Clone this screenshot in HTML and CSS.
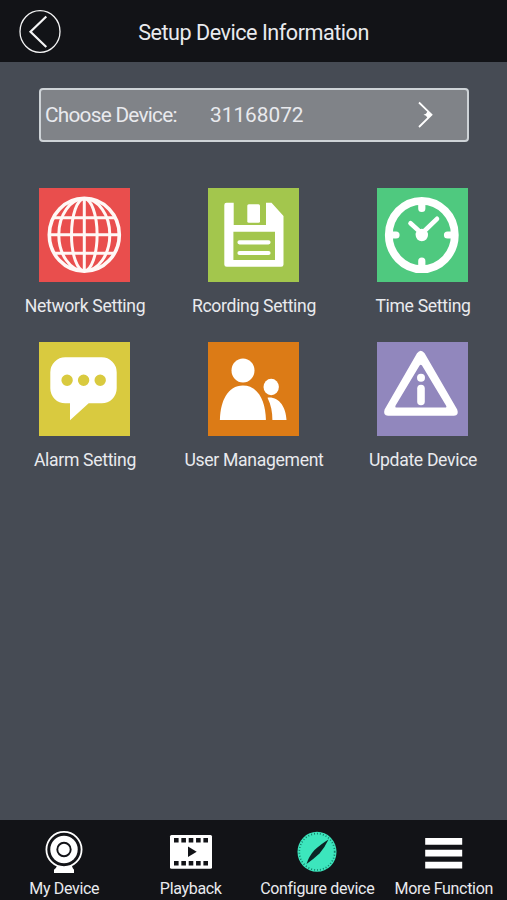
FILE: index.html
```html
<!DOCTYPE html>
<html lang="en">
<head>
<meta charset="utf-8">
<title>Setup Device Information</title>
<link rel="stylesheet" href="styles.css">
</head>
<body>
<div class="app">
  <header class="header">
    <button class="back" aria-label="Back">
      <svg width="42" height="44" viewBox="0 0 42 44" fill="none" stroke="#f4f4f5">
        <ellipse cx="21" cy="21.500" rx="20" ry="20.800" stroke-width="1.300"/>
        <path d="M27.300 6.500 11.500 21.800 27.300 37" stroke-width="2.200"/>
      </svg>
    </button>
    <h1 class="title">Setup Device Information</h1>
  </header>

  <main class="main">
    <div class="chooser">
      <span class="chooser-label">Choose Device:</span>
      <span class="chooser-value">31168072</span>
      <svg class="chooser-arrow" width="18" height="28" viewBox="0 0 18 28">
        <path d="M3 1.500 15.500 13.700 3 26" fill="none" stroke="#fff" stroke-width="1.800"/>
        <path d="m7.500 13.700 2.500-1 1.500-2.200 3.800 3.200-3.800 3.200-1.500-2.200z" fill="#fff"/>
      </svg>
    </div>

    <div class="grid">
      <a class="item">
        <svg class="tile red" viewBox="0 0 91 94" fill="none" stroke="#fff8f6" stroke-width="3">
          <ellipse cx="45.300" cy="46.800" rx="35" ry="36.500" stroke-width="3.600"/>
          <ellipse cx="45.300" cy="46.800" rx="12.800" ry="36"/>
          <ellipse cx="45.300" cy="46.800" rx="25.500" ry="36"/>
          <path d="M45.300 10v73M10 46.800h70M15 29.800h60.500M15 65.300h60.500"/>
        </svg>
        <span class="label">Network Setting</span>
      </a>
      <a class="item">
        <svg class="tile green" viewBox="0 0 91 94">
          <path fill="#fff" fill-rule="evenodd" d="M18.500 14.700h7.200V37H58V14.700h5.500L75.500 28v48.500q0 2.300-2.300 2.300H18.700q-2.400 0-2.400-2.300V17q0-2.300 2.200-2.300zM25.400 43.700V72H67V43.700z"/>
          <rect x="39.300" y="16.300" width="12.700" height="18.400" rx="1.500" fill="#fff"/>
          <path d="M31.500 54.300h29M31.500 65h29" stroke="#fff" stroke-width="4.200" stroke-linecap="round"/>
        </svg>
        <span class="label">Rcording Setting</span>
      </a>
      <a class="item">
        <svg class="tile mint" viewBox="0 0 91 94" fill="none" stroke="#fff" stroke-linecap="round">
          <ellipse cx="44.800" cy="47" rx="33" ry="34.200" stroke-width="7.800"/>
          <path d="M44.800 14v6.500M44.800 73v7M12 47h7M70.500 47h7" stroke-width="7.200"/>
          <path d="M44.800 45.500 33.500 35.200M44.800 45.500 60 30.800" stroke-width="4.600"/>
          <circle cx="44.800" cy="47" r="6.200" fill="#fff" stroke="none"/>
        </svg>
        <span class="label">Time Setting</span>
      </a>
      <a class="item">
        <svg class="tile yellow" viewBox="0 0 91 94">
          <path fill="#fff" fill-rule="evenodd" d="M26.300 15.300h36.400a15 15 0 0 1 15 15v16a15 15 0 0 1-15 15h-13L31 78.300V61.300h-4.700a15 15 0 0 1-15-15v-16a15 15 0 0 1 15-15zM22.400 38.300a5.700 5.700 0 1 0 11.400 0a5.700 5.700 0 1 0-11.400 0M38.900 38.300a5.700 5.700 0 1 0 11.400 0a5.700 5.700 0 1 0-11.400 0M55.500 38.300a5.700 5.700 0 1 0 11.400 0a5.700 5.700 0 1 0-11.400 0"/>
        </svg>
        <span class="label">Alarm Setting</span>
      </a>
      <a class="item">
        <svg class="tile orange" viewBox="0 0 91 94" fill="#fff">
          <ellipse cx="35" cy="28.400" rx="11.500" ry="12"/>
          <path d="M11.900 78C12.200 59 19.700 43.400 34.900 43.400S57.600 59 57.900 78z"/>
          <ellipse cx="63.200" cy="45" rx="7.700" ry="8.200"/>
          <path d="M59.500 55.700C71 54.500 78 65 78.500 78H64.400C64.400 70 63.200 63 59.500 55.700z"/>
        </svg>
        <span class="label">User Management</span>
      </a>
      <a class="item">
        <svg class="tile purple" viewBox="0 0 91 94">
          <path fill="#fff" fill-rule="evenodd" d="M40 11.300Q43.800 6.300 47.600 11.300L80.200 67.500Q82.300 73.500 77 73.700H11Q5.700 73.500 7.600 67.500zM42.600 23.500 18.600 63.500Q17.700 65.600 19.500 65.600H68.200Q70.200 65.600 69 63.500L45 23.500Q43.800 21.800 42.600 23.500z"/>
          <circle cx="44" cy="35.700" r="4" fill="#fff"/>
          <path d="M44 46.500v13" stroke="#fff" stroke-width="7.600" stroke-linecap="round"/>
        </svg>
        <span class="label">Update Device</span>
      </a>
    </div>
  </main>

  <nav class="nav">
    <a class="tab">
      <svg class="tab-icon" viewBox="0 0 46 46">
        <path d="M16 38h15q.5 2.500 2 3.800v3.200H13v-3.200q2-1.300 3-3.800z" fill="#fff"/>
        <circle cx="23" cy="21.500" r="17.600" fill="#121317" stroke="#fff" stroke-width="1.800"/>
        <circle cx="23" cy="21.500" r="13.700" fill="#fff"/>
        <circle cx="23" cy="21.500" r="6.700" fill="#fff" stroke="#121317" stroke-width="1.900"/>
      </svg>
      <span class="tab-label">My Device</span>
    </a>
    <a class="tab">
      <svg class="tab-icon" viewBox="0 0 46 46">
        <rect x="2" y="7" width="42" height="33.700" rx="1.500" fill="#fff"/>
        <path d="M6 12.200h34.400M6 35.300h34.400" stroke="#121317" stroke-width="4.600" stroke-dasharray="4.600 2.750"/>
        <path d="M20 18.500v10.400l8.700-5.200z" fill="#121317"/>
      </svg>
      <span class="tab-label">Playback</span>
    </a>
    <a class="tab">
      <svg class="tab-icon" viewBox="0 0 46 46">
        <ellipse cx="23" cy="23.800" rx="19.500" ry="20" fill="#3ce6bd"/>
        <ellipse cx="23" cy="23.800" rx="17.700" ry="18.200" fill="none" stroke="#157f6a" stroke-width="1.700" stroke-dasharray="1 2"/>
        <path d="M34.500 11.500Q28.500 15 20.500 22 15 28 12.500 36 18.500 32 25.500 25.500 31 19 34.500 11.500z" fill="#0b2425"/>
      </svg>
      <span class="tab-label">Configure device</span>
    </a>
    <a class="tab">
      <svg class="tab-icon" viewBox="0 0 46 46">
        <path d="M4.200 13.300h37M4.200 25.200h37M4.200 37.100h37" stroke="#fff" stroke-width="6.700"/>
      </svg>
      <span class="tab-label">More Function</span>
    </a>
  </nav>
</div>
</body>
</html>
```
FILE: styles.css
```css
* { box-sizing: border-box; }

body {
  margin: 0;
  font-family: Roboto, "Liberation Sans", sans-serif;
  color: #e9eaee;
  background: #464b54;
}

.app {
  display: flex;
  flex-direction: column;
  width: 507px;
  height: 900px;
  overflow: hidden;
  background: #464b54;
}

.header {
  display: grid;
  grid-template-columns: 61px 1fr 61px;
  align-items: center;
  height: 61.5px;
  padding-top: 2px;
  background: #121317;
}

.back {
  display: flex;
  margin: 0 0 0 18.500px;
  padding: 0;
  border: 0;
  background: none;
}

.title {
  margin: 2px 0 0;
  font-size: 21.600px;
  font-weight: 400;
  letter-spacing: -0.480px;
  text-align: center;
  white-space: nowrap;
}

.main {
  flex: 1;
  padding-top: 26px;
}

.chooser {
  display: flex;
  align-items: center;
  width: 430px;
  height: 54px;
  margin: 0 0 0 39px;
  padding: 1px 33px 0 4px;
  border: 2px solid #ced3d7;
  border-radius: 4px;
  background: #808388;
  font-size: 20.800px;
}

.chooser-label {
  width: 165px;
  letter-spacing: -0.750px;
}

.chooser-arrow {
  margin-left: auto;
  margin-top: -1px;
}

.grid {
  display: grid;
  grid-template-columns: repeat(3, 169px);
  grid-auto-rows: 153.800px;
  margin-top: 46.500px;
}

.item {
  display: flex;
  flex-direction: column;
  align-items: center;
}

.tile {
  width: 91px;
  height: 94px;
}

.red { background: #e94e4d; }
.green { background: #a3c64d; }
.mint { background: #4fc97f; }
.yellow { background: #d9ca3f; }
.orange { background: #dc7b16; }
.purple { background: #9187bd; }

.label {
  margin-top: 13.200px;
  padding-left: 1px;
  font-size: 17.600px;
  letter-spacing: -0.320px;
  line-height: 22px;
  white-space: nowrap;
}

.nav {
  display: grid;
  grid-template-columns: repeat(4, 1fr);
  height: 80px;
  padding-left: 1px;
  background: #121317;
}

.tab {
  display: flex;
  flex-direction: column;
  align-items: center;
  padding-top: 8px;
}

.tab-icon {
  width: 46px;
  height: 46px;
}

.tab-label {
  margin-top: 5px;
  font-size: 16px;
  letter-spacing: -0.320px;
  line-height: 20px;
  white-space: nowrap;
}
```
